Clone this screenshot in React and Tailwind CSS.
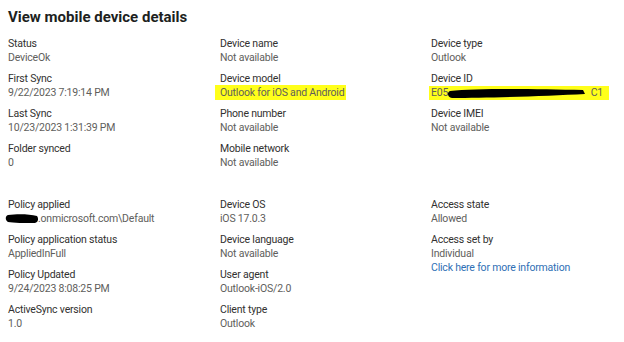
export default function App() {
  const Field = ({ label, children }) => (
    <div className="flex flex-col">
      <div className="text-[#323130]">{label}</div>
      <div className="text-[#605e5c]">{children}</div>
    </div>
  );

  return (
    <div className="w-[624px] h-[342px] bg-white overflow-hidden px-2 pt-[7px] font-['Roboto',sans-serif] text-[10.5px] tracking-[-0.2px] leading-[14px]">
      <h1 className="text-[15px] leading-[20px] font-bold tracking-normal text-[#201f1e] mb-[10px]">View mobile device details</h1>

      <div className="grid grid-cols-[212px_211px_1fr] gap-y-[7px]">
        <Field label="Status">DeviceOk</Field>
        <Field label="Device name">Not available</Field>
        <Field label="Device type">Outlook</Field>

        <Field label="First Sync">9/22/2023 7:19:14 PM</Field>
        <Field label="Device model">
          <span className="bg-[#ffff1a] -ml-[5px] pl-[5px] pr-[2px] py-[1px] text-[#605e5c]">Outlook for iOS and Android</span>
        </Field>
        <Field label="Device ID">
          <span className="relative inline-block bg-[#ffff1a] -ml-[2px] pl-[2px] w-[180px]">
            E05
            <span className="absolute right-[6px] top-0">C1</span>
            <svg className="absolute left-[18px] top-[1px]" width="140" height="12" viewBox="0 0 140 12">
              <path d="M3 4 C30 1, 90 2, 136 3 L138 7 C100 9, 40 11, 5 11 C0 10, 0 5, 3 4 Z" fill="#000" />
            </svg>
          </span>
        </Field>

        <Field label="Last Sync">10/23/2023 1:31:39 PM</Field>
        <Field label="Phone number">Not available</Field>
        <Field label="Device IMEI">Not available</Field>

        <Field label="Folder synced">0</Field>
        <Field label="Mobile network">Not available</Field>
        <div />
      </div>

      <div className="grid grid-cols-[212px_211px_1fr] gap-y-[7px] mt-[28px]">
        <Field label="Policy applied">
          <span className="relative pl-[30px]">
            <svg className="absolute -left-[3px] top-[1px]" width="34" height="11" viewBox="0 0 34 11">
              <path d="M3 2 C12 1, 24 1, 32 3 C34 6, 33 9, 30 10 C20 10, 8 10, 3 9 C0 7, 0 3, 3 2 Z" fill="#000" />
            </svg>
            .onmicrosoft.com\Default
          </span>
        </Field>
        <Field label="Device OS">iOS 17.0.3</Field>
        <Field label="Access state">Allowed</Field>

        <Field label="Policy application status">AppliedInFull</Field>
        <Field label="Device language">Not available</Field>
        <div className="flex flex-col row-span-2">
          <div className="text-[#323130]">Access set by</div>
          <div className="text-[#605e5c]">Individual</div>
          <a className="text-[#2f6fb5]">Click here for more information</a>
        </div>

        <Field label="Policy Updated">9/24/2023 8:08:25 PM</Field>
        <Field label="User agent">Outlook-iOS/2.0</Field>

        <Field label="ActiveSync version">1.0</Field>
        <Field label="Client type">Outlook</Field>
      </div>
    </div>
  );
}
